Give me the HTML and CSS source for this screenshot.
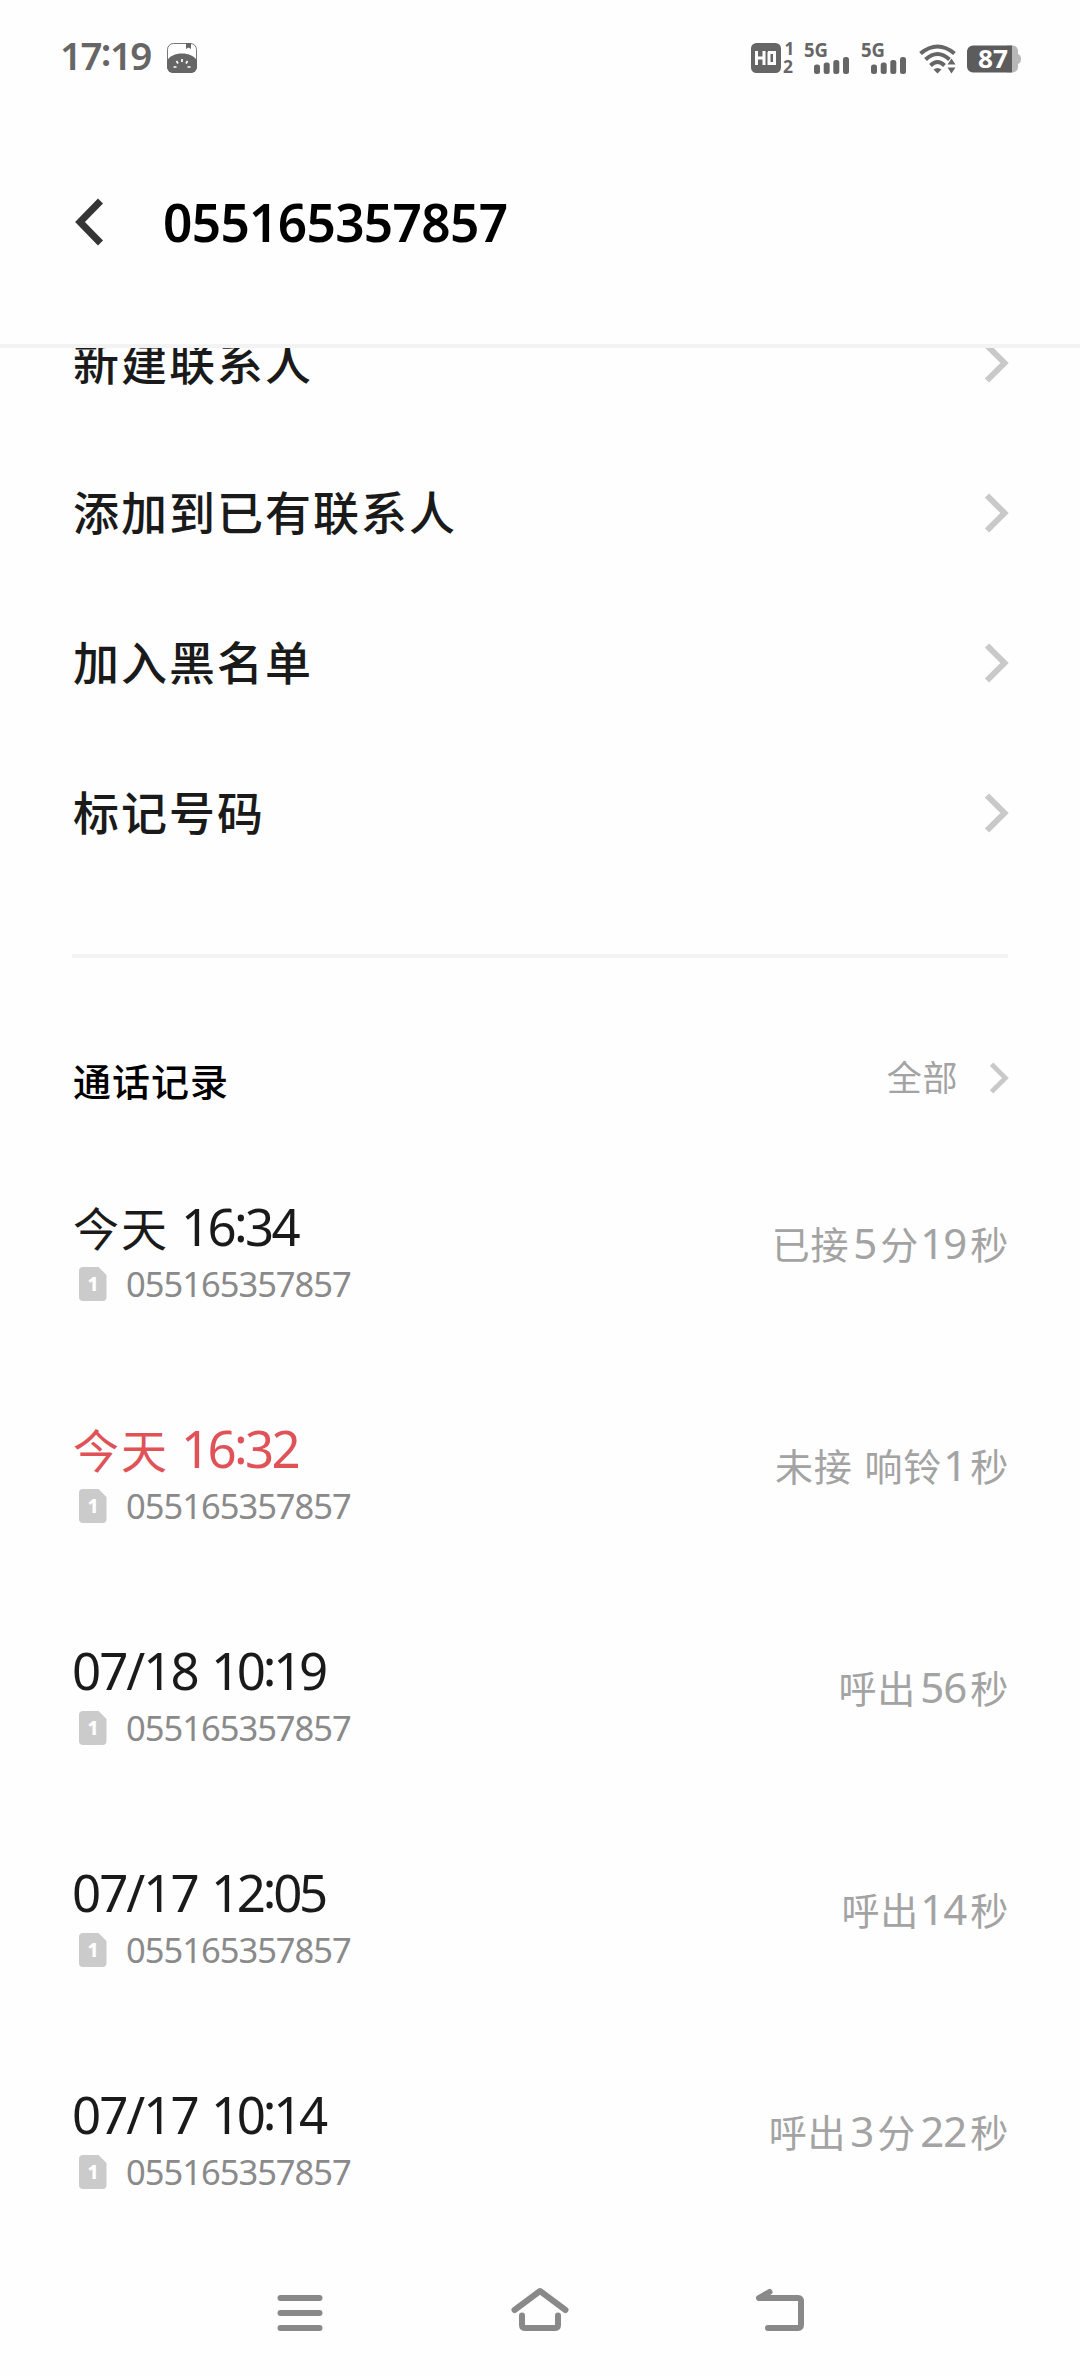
FILE: index.html
```html
<!DOCTYPE html>
<html lang="zh-CN">
<head>
<meta charset="utf-8">
<title>055165357857</title>
<link rel="stylesheet" href="styles.css">
</head>
<body>
<svg class="defs" width="0" height="0" aria-hidden="true">
  <symbol id="chevron" viewBox="0 0 24 40"><path d="M2 2.5 19.5 20 2 37.5" fill="none" stroke="#c9c9c9" stroke-width="6"/></symbol>
  <symbol id="sim" viewBox="0 0 28 34"><path d="M4 0H19.500L27.500 8V30a4 4 0 0 1-4 4H4a4 4 0 0 1-4-4V4a4 4 0 0 1 4-4Z" fill="#cbcbcb"/></symbol>
  <symbol id="bars" viewBox="0 0 46 32"><g fill="#666"><rect x="10" y="22.500" width="6" height="9.500" rx="2.500"/><rect x="19.700" y="20.500" width="6" height="11.500" rx="2.500"/><rect x="29.300" y="18" width="6" height="14" rx="2.500"/><rect x="39" y="15" width="6" height="17" rx="2.500"/></g></symbol>
</svg>
<div class="screen">
  <div class="status">
    <div class="clock">17<span class="colon">:</span>19</div>
    <svg class="app" width="30" height="30" viewBox="0 0 30 30"><rect x=".5" y=".5" width="29" height="29" rx="6" fill="#fff" stroke="#777"/><path d="M19 0h5v6l-2.500-1.500L19 6Z" fill="#666"/><path d="M0 18C4 8 26 8 30 18v6a6 6 0 0 1-6 6H6a6 6 0 0 1-6-6Z" fill="#666"/><path d="M15 16v3M9.500 18l1.500 2.500M20.500 18 19 20.500M6.500 24h3M20.500 24h3" stroke="#fff" stroke-width="1.700"/></svg>
    <div class="indicators">
      <svg class="hd" width="43" height="32" viewBox="0 0 43 32"><rect y="1" width="30" height="30" rx="5.500" fill="#666"/><path d="M5.500 9v14M13 9v14M5.500 16H13M17 10.500h6.500v11H18V10" fill="none" stroke="#fff" stroke-width="3"/><text x="33.500" y="13" class="slot-text">1</text><text x="32" y="30.500" class="slot-text" textLength="10" lengthAdjust="spacingAndGlyphs">2</text></svg>
      <svg class="sig" width="46" height="32"><use href="#bars"/><text x="0" y="15" class="net-text" textLength="24" lengthAdjust="spacingAndGlyphs">5G</text></svg>
      <svg class="sig" width="46" height="32"><use href="#bars"/><text x="0" y="15" class="net-text" textLength="24" lengthAdjust="spacingAndGlyphs">5G</text></svg>
      <svg class="wifi" width="38" height="30" viewBox="0 0 38 30"><g fill="none" stroke="#666" stroke-width="4"><path d="M1.500 9.500Q18.500-4.500 35.500 9.500"/><path d="M6.500 15.500Q18.500 4.500 30.500 15.500"/><path d="M11.500 21.500Q18.500 14.500 25.500 21.500"/></g><path d="M14.500 25.500q4-3 8 0l-4 4Z" fill="#666"/><path d="M28.500 20.500h8l-4-6Zm0 3h8l-4 6Z" fill="#666" stroke="#fff" stroke-width="1.200" paint-order="stroke"/></svg>
      <svg class="battery" width="54" height="28" viewBox="0 0 54 28"><path d="M40 .5h6a6 6 0 0 1 5 5V9q3 1 3 5t-3 5v3a6 6 0 0 1-5 5.500h-6Z" fill="#b8b8b8"/><path d="M6 .5h39v27H6a6 6 0 0 1-6-6v-15a6 6 0 0 1 6-6Z" fill="#5c5c5c"/><text x="11" y="22.500" class="battery-text" textLength="30" lengthAdjust="spacingAndGlyphs">87</text></svg>
    </div>
  </div>
  <header class="header">
    <svg width="30" height="48" viewBox="0 0 30 48"><path d="M25.500 3 5 24l20.500 21" fill="none" stroke="#353535" stroke-width="7"/></svg>
    <h1 class="title">055165357857</h1>
  </header>
  <main class="content">
    <ul class="menu">
      <li class="item"><span>新建联系人</span><svg width="24" height="40"><use href="#chevron"/></svg></li>
      <li class="item"><span>添加到已有联系人</span><svg width="24" height="40"><use href="#chevron"/></svg></li>
      <li class="item"><span>加入黑名单</span><svg width="24" height="40"><use href="#chevron"/></svg></li>
      <li class="item"><span>标记号码</span><svg width="24" height="40"><use href="#chevron"/></svg></li>
    </ul>
    <div class="log-head"><h2 class="log-title">通话记录</h2><span class="all">全部</span><svg width="19" height="32"><use href="#chevron"/></svg></div>
    <ul class="log">
      <li class="call">
        <div class="info"><div class="time"><span class="day">今天</span><span class="hour">16<span class="colon">:</span>34</span></div><div class="number"><svg width="28" height="34"><use href="#sim"/><text x="14" y="24" class="sim-text">1</text></svg>055165357857</div></div>
        <div class="detail"><span>已接</span><b>5</b><span>分</span><b class="one">19</b><span>秒</span></div>
      </li>
      <li class="call missed">
        <div class="info"><div class="time"><span class="day">今天</span><span class="hour">16<span class="colon">:</span>32</span></div><div class="number"><svg width="28" height="34"><use href="#sim"/><text x="14" y="24" class="sim-text">1</text></svg>055165357857</div></div>
        <div class="detail"><span>未接</span><span class="ring">响铃</span><b class="one">1</b><span>秒</span></div>
      </li>
      <li class="call">
        <div class="info"><div class="time"><span class="date">07/18</span><span class="hour">10<span class="colon">:</span>19</span></div><div class="number"><svg width="28" height="34"><use href="#sim"/><text x="14" y="24" class="sim-text">1</text></svg>055165357857</div></div>
        <div class="detail"><span>呼出</span><b>56</b><span>秒</span></div>
      </li>
      <li class="call">
        <div class="info"><div class="time"><span class="date">07/17</span><span class="hour">12<span class="colon">:</span>05</span></div><div class="number"><svg width="28" height="34"><use href="#sim"/><text x="14" y="24" class="sim-text">1</text></svg>055165357857</div></div>
        <div class="detail"><span>呼出</span><b class="one">14</b><span>秒</span></div>
      </li>
      <li class="call">
        <div class="info"><div class="time"><span class="date">07/17</span><span class="hour">10<span class="colon">:</span>14</span></div><div class="number"><svg width="28" height="34"><use href="#sim"/><text x="14" y="24" class="sim-text">1</text></svg>055165357857</div></div>
        <div class="detail"><span>呼出</span><b>3</b><span>分</span><b>22</b><span>秒</span></div>
      </li>
    </ul>
  </main>
  <nav class="nav">
    <svg width="60" height="64" viewBox="0 0 60 64"><path d="M10.500 28h39M10.500 43h39M10.500 58h39"/></svg>
    <svg width="60" height="64" viewBox="0 0 60 64"><path d="M4.500 40 30 21l25.500 19M12 45.500V55q0 3 3.500 3h29q3.500 0 3.500-3v-9.500"/></svg>
    <svg width="60" height="64" viewBox="0 0 60 64"><path d="M19.500 22 9 28h39q3 0 3 3.500v23q0 3.500-3 3.500H18"/></svg>
  </nav>
</div>
</body>
</html>
```

FILE: styles.css
```css
* { box-sizing: border-box; }
body { margin: 0; background: #fefefe; color: #1a1a1a; font-family: "Noto Sans", "Noto Sans CJK SC", sans-serif; }
ul, h1, h2 { margin: 0; padding: 0; list-style: none; }
.defs { display: none; }
.screen { width: 1080px; height: 2376px; display: flex; flex-direction: column; overflow: hidden; }
.colon { position: relative; top: -4px; }

.status { height: 100px; display: flex; align-items: flex-start; padding: 42px 59px 0 60px; color: #666; }
.clock { width: 107px; margin-top: -1px; font-size: 38.5px; font-weight: 600; line-height: 28px; letter-spacing: -1.6px; white-space: nowrap; }
.app { margin-top: 1px; }
.indicators { display: flex; margin-left: auto; }
.sig { margin-left: 11px; }
.hd + .sig { margin-left: 10px; }
.wifi { margin: 2px 0 0 12px; }
.battery { margin: 3px 0 0 10px; }
.net-text { font-size: 19.5px; font-weight: 700; fill: #666; }
.slot-text { font-size: 17px; font-weight: 700; fill: #666; }
.battery-text { font-size: 25px; font-weight: 700; fill: #fff; }
.sim-text { font-size: 19px; font-weight: 800; fill: #fff; text-anchor: middle; letter-spacing: 0; }

.header { height: 248px; flex: none; display: flex; align-items: center; padding: 0 72px 0 75px; border-bottom: 4px solid #f3f3f3; }
.title { margin-left: 58px; font-size: 51.4px; font-weight: 600; line-height: 60px; letter-spacing: -0.7px; color: #000; }

.content { flex: 1; overflow: hidden; padding: 0 71px 0 72px; }
.menu { margin: -60px 1px 0 0; padding-bottom: 66px; border-bottom: 4px solid #f3f3f3; }
.item { height: 150px; display: flex; align-items: center; justify-content: space-between; padding-left: 1px; font-size: 46px; font-weight: 500; letter-spacing: 2px; }
.item span { padding-bottom: 6px; }
.item svg { margin-right: -1px; }
.log-head { height: 179px; display: flex; align-items: center; padding: 60px 0 0; }
.log-title { flex: 1; padding: 4px 0 0 1px; font-size: 38px; font-weight: 500; letter-spacing: 1px; color: #000; }
.all { padding-bottom: 4px; font-size: 35px; letter-spacing: .6px; color: #a3a3a3; margin-right: 32px; }
.call { height: 222px; display: flex; align-items: center; justify-content: space-between; }
.info { padding-top: 3px; }
.time { display: flex; align-items: baseline; height: 60px; font-size: 51px; line-height: 60px; white-space: nowrap; }
.day { width: 109px; padding-left: 1px; font-size: 46px; letter-spacing: 2px; }
.date { width: 139px; letter-spacing: -2px; }
.hour { letter-spacing: -2.7px; }
.date + .hour { letter-spacing: -3.3px; }
.missed .time { color: #e05258; }
.number { display: flex; align-items: center; gap: 19px; margin-top: 8px; padding-left: 7px; font-size: 34.5px; line-height: 40px; letter-spacing: -1px; color: #8a8a8a; }
.detail { display: flex; align-items: baseline; padding-bottom: 10px; font-size: 38px; line-height: 50px; letter-spacing: .8px; color: #a3a3a3; }
.detail b { font-size: 42px; font-weight: 400; letter-spacing: -1px; margin: 0 4px; }
.detail .one { margin-left: 1px; }
.ring { margin-left: 12px; }

.nav { height: 130px; flex: none; display: flex; justify-content: space-between; padding: 24px 270px 0; }
.nav svg { fill: none; stroke: #898989; stroke-width: 6; stroke-linecap: round; stroke-linejoin: round; }
```
